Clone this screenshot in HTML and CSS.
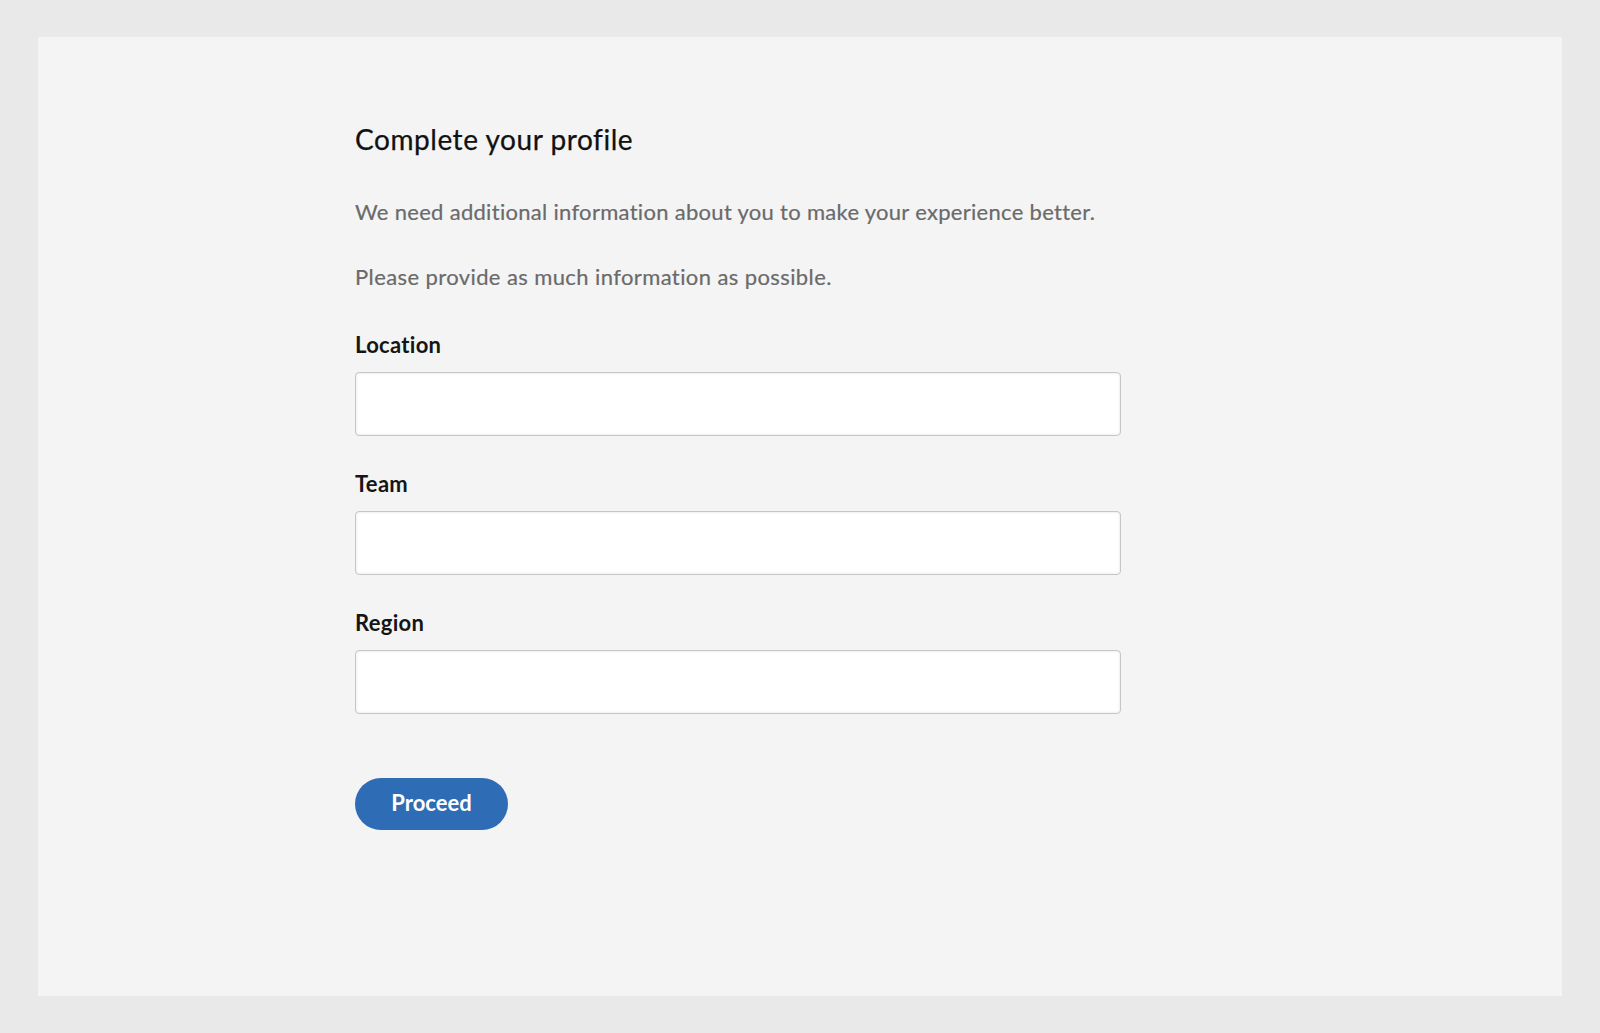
FILE: index.html
```html
<!DOCTYPE html>
<html lang="en">
<head>
<meta charset="utf-8">
<title>Complete your profile</title>
<link rel="stylesheet" href="styles.css">
</head>
<body>
<main class="panel">
  <form class="profile-form" onsubmit="return false">
    <h1 class="title">Complete your profile</h1>
    <p class="intro">We need additional information about you to make your experience better.</p>
    <p class="intro intro-second">Please provide as much information as possible.</p>
    <div class="field">
      <label class="field-label" for="location">Location</label>
      <input class="field-input" id="location" type="text">
    </div>
    <div class="field">
      <label class="field-label" for="team">Team</label>
      <input class="field-input" id="team" type="text">
    </div>
    <div class="field">
      <label class="field-label" for="region">Region</label>
      <input class="field-input" id="region" type="text">
    </div>
    <button class="proceed" type="submit">Proceed</button>
  </form>
</main>
</body>
</html>
```

FILE: styles.css
```css
html, body {
  margin: 0;
  padding: 0;
}
body {
  background: #e9e9e9;
  padding: 37px 38px 37px 38px;
  font-family: Lato, "Liberation Sans", sans-serif;
  box-sizing: border-box;
  height: 1033px;
}
.panel {
  background: #f4f4f4;
  height: 959px;
  box-sizing: border-box;
  padding: 86px 0 0 317px;
}
.profile-form {
  width: 766px;
  display: flex;
  flex-direction: column;
  align-items: flex-start;
}
.title {
  margin: 0;
  font-size: 28px;
  line-height: 32px;
  font-weight: 400;
  letter-spacing: 0.55px;
  color: #111;
  -webkit-text-stroke: 0.25px #111;
}
.intro {
  margin: 44px 0 0 0;
  font-size: 22px;
  line-height: 26px;
  letter-spacing: 0.3px;
  color: #6a6a6a;
  -webkit-text-stroke: 0.2px #6a6a6a;
}
.intro-second {
  margin-top: 39px;
  letter-spacing: 0.4px;
}
.field {
  width: 100%;
  display: flex;
  flex-direction: column;
  margin-bottom: 35px;
}
.intro-second + .field {
  margin-top: 42px;
}
.field-label {
  font-size: 22px;
  line-height: 26px;
  font-weight: 700;
  letter-spacing: 0.3px;
  color: #151515;
  margin-bottom: 14px;
}
.field-input {
  width: 100%;
  height: 64px;
  box-sizing: border-box;
  border: 1px solid #c6c6c6;
  border-radius: 4px;
  background: #fff;
  box-shadow: inset 0 0 3px rgba(0,0,0,0.12);
  font-family: inherit;
  font-size: 20px;
  padding: 0 14px;
  outline: none;
}
.proceed {
  margin-top: 29px;
  width: 153px;
  height: 52px;
  border: none;
  border-radius: 26px;
  background: #2e6cb5;
  color: #fff;
  font-family: inherit;
  font-size: 22px;
  font-weight: 700;
  padding: 0 0 3px 0;
  cursor: pointer;
}
```
